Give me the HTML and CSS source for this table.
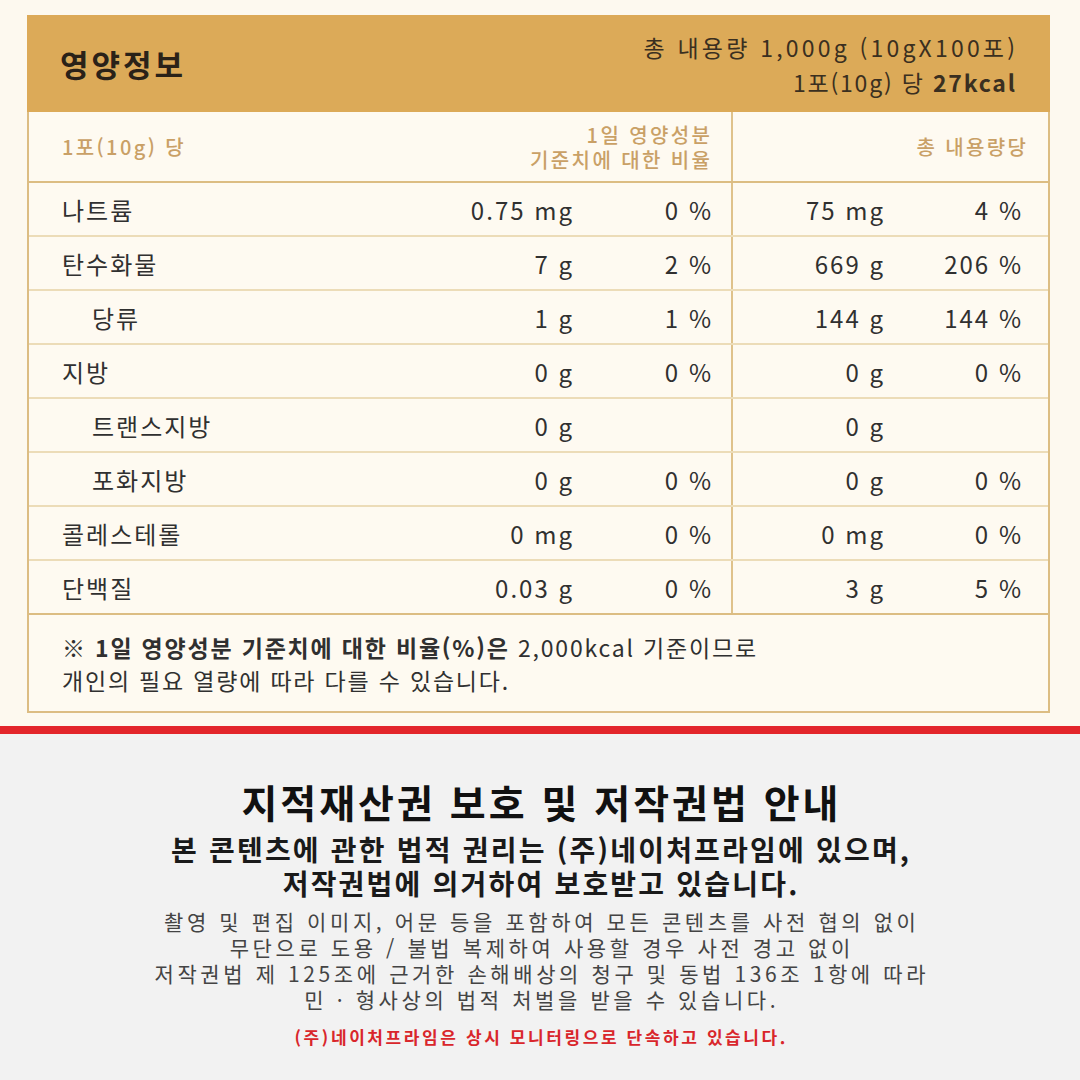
FILE: index.html
```html
<!DOCTYPE html>
<html lang="ko">
<head>
<meta charset="utf-8">
<link rel="stylesheet" href="styles.css">
</head>
<body>
<section class="nutri-wrap">
  <div class="nutri">
    <header class="nutri-head">
      <h1 class="nutri-title">영양정보</h1>
      <div class="nutri-total">
        <div class="tl1">총 내용량 1,000g (10gX100포)</div>
        <div class="tl2">1포(10g) 당 <b>27kcal</b></div>
      </div>
    </header>
    <div class="row colhead">
      <div class="c-label">1포(10g) 당</div>
      <div class="c-span-left"><div class="hl">1일 영양성분</div><div class="hl">기준치에 대한 비율</div></div>
      <div class="c-span-right"><span>총 내용량당</span></div>
    </div>
    <div class="row"><div class="c-label">나트륨</div><div class="c-amt"><span>0.75 mg</span></div><div class="c-pct"><span>0 %</span></div><div class="c-amt2"><span>75 mg</span></div><div class="c-pct2"><span>4 %</span></div></div>
    <div class="row"><div class="c-label">탄수화물</div><div class="c-amt"><span>7 g</span></div><div class="c-pct"><span>2 %</span></div><div class="c-amt2"><span>669 g</span></div><div class="c-pct2"><span>206 %</span></div></div>
    <div class="row"><div class="c-label sub">당류</div><div class="c-amt"><span>1 g</span></div><div class="c-pct"><span>1 %</span></div><div class="c-amt2"><span>144 g</span></div><div class="c-pct2"><span>144 %</span></div></div>
    <div class="row"><div class="c-label">지방</div><div class="c-amt"><span>0 g</span></div><div class="c-pct"><span>0 %</span></div><div class="c-amt2"><span>0 g</span></div><div class="c-pct2"><span>0 %</span></div></div>
    <div class="row"><div class="c-label sub">트랜스지방</div><div class="c-amt"><span>0 g</span></div><div class="c-pct"></div><div class="c-amt2"><span>0 g</span></div><div class="c-pct2"></div></div>
    <div class="row"><div class="c-label sub">포화지방</div><div class="c-amt"><span>0 g</span></div><div class="c-pct"><span>0 %</span></div><div class="c-amt2"><span>0 g</span></div><div class="c-pct2"><span>0 %</span></div></div>
    <div class="row"><div class="c-label">콜레스테롤</div><div class="c-amt"><span>0 mg</span></div><div class="c-pct"><span>0 %</span></div><div class="c-amt2"><span>0 mg</span></div><div class="c-pct2"><span>0 %</span></div></div>
    <div class="row last"><div class="c-label">단백질</div><div class="c-amt"><span>0.03 g</span></div><div class="c-pct"><span>0 %</span></div><div class="c-amt2"><span>3 g</span></div><div class="c-pct2"><span>5 %</span></div></div>
    <div class="nutri-note">
      <div><b>※ 1일 영양성분 기준치에 대한 비율(%)은</b> 2,000kcal 기준이므로</div>
      <div>개인의 필요 열량에 따라 다를 수 있습니다.</div>
    </div>
  </div>
</section>
<div class="redline"></div>
<section class="notice">
  <h2 class="notice-title">지적재산권 보호 및 저작권법 안내</h2>
  <div class="notice-sub">
    <p>본 콘텐츠에 관한 법적 권리는 (주)네이처프라임에 있으며,</p>
    <p>저작권법에 의거하여 보호받고 있습니다.</p>
  </div>
  <div class="notice-body">
    <p>촬영 및 편집 이미지, 어문 등을 포함하여 모든 콘텐츠를 사전 협의 없이</p>
    <p>무단으로 도용 / 불법 복제하여 사용할 경우 사전 경고 없이</p>
    <p>저작권법 제 125조에 근거한 손해배상의 청구 및 동법 136조 1항에 따라</p>
    <p>민 · 형사상의 법적 처벌을 받을 수 있습니다.</p>
  </div>
  <p class="notice-red">(주)네이처프라임은 상시 모니터링으로 단속하고 있습니다.</p>
</section>
</body>
</html>
```

FILE: styles.css
```css
* { box-sizing: border-box; }
html, body { margin: 0; padding: 0; }
body {
  width: 1080px;
  height: 1080px;
  overflow: hidden;
  background: #f2f2f2;
  font-family: "Noto Sans CJK KR", "Noto Sans", sans-serif;
  color: #333;
}
.nutri-wrap {
  background: #fdf9ef;
  padding: 15px 30px 13px 27px;
}
.nutri {
  border: 2px solid #dcbd83;
  background: #fefaf1;
}
.nutri-head {
  background: #dcaa58;
  height: 97px;
  display: flex;
  align-items: center;
  justify-content: space-between;
  padding: 0 35px 0 33px;
  margin: -2px -2px 0 -2px;
}
.nutri-title {
  margin: 0;
  font-size: 31px;
  font-weight: 700;
  color: #2a2218;
  letter-spacing: 3px;
}
.nutri-total {
  text-align: right;
  font-size: 23px;
  line-height: 35px;
  color: #3a2f20;
  padding-top: 2px;
}
.nutri-total .tl1 { letter-spacing: 3.2px; margin-right: -3.2px; }
.nutri-total .tl2 { letter-spacing: 1.8px; margin-right: -1.8px; }
.nutri-total b { font-weight: 700; }
.row {
  display: grid;
  grid-template-columns: 403px 140px 159px 152px 1fr;
  height: 54px;
  align-items: center;
  border-bottom: 2px solid #ecdcb8;
  font-size: 24px;
  letter-spacing: 2px;
  color: #303030;
}
.row > div { height: 100%; display: flex; align-items: center; }
.row > div > span { margin-right: -2px; }
.row.last { border-bottom: 2px solid #dcbd83; }
.c-label { padding-left: 33px; }
.c-label.sub { padding-left: 63px; }
.c-amt, .c-pct, .c-amt2, .c-pct2 { justify-content: flex-end; }
.c-pct { padding-right: 20px; }
.c-amt2 { border-left: 2px solid #dfc28b; }
.c-pct2 { padding-right: 27px; }
.row.colhead {
  height: 71px;
  grid-template-columns: 403px 299px 1fr;
  border-bottom: 2px solid #dcbd83;
  font-size: 20px;
  letter-spacing: 2.4px;
  color: #c9a066;
  font-weight: 500;
}
.row.colhead > div > span { margin-right: -2.4px; }
.c-span-left {
  flex-direction: column;
  justify-content: center;
  align-items: flex-end !important;
  padding-right: 21px;
}
.c-span-left .hl {
  line-height: 25px;
  height: 25px;
  margin-right: -2.4px;
}
.c-span-right {
  justify-content: flex-end;
  border-left: 2px solid #dfc28b;
  padding-right: 22px;
}
.nutri-note {
  padding: 16px 33px 14px;
  font-size: 23px;
  line-height: 33px;
  letter-spacing: 1.8px;
  color: #303030;
}
.nutri-note b { font-weight: 700; }
.redline {
  height: 8px;
  background: #e3262b;
}
.notice {
  background: #f2f2f2;
  text-align: center;
  padding-top: 47px;
}
.notice p { margin: 0; }
.notice-title {
  margin: 0;
  font-size: 39px;
  line-height: 40px;
  font-weight: 700;
  color: #111;
  letter-spacing: 3px;
  padding-left: 3px;
}
.notice-sub {
  margin-top: 11px;
  font-size: 28px;
  line-height: 34px;
  font-weight: 700;
  color: #1a1a1a;
  letter-spacing: 2.2px;
  padding-left: 2.2px;
}
.notice-body {
  margin-top: 8px;
  font-size: 21px;
  line-height: 26px;
  color: #444;
  letter-spacing: 3.6px;
  padding-left: 3.6px;
}
.notice .notice-red {
  margin-top: 14px;
  font-size: 17px;
  line-height: 22px;
  font-weight: 700;
  color: #d9262b;
  letter-spacing: 2.6px;
  padding-left: 2.6px;
}
```
